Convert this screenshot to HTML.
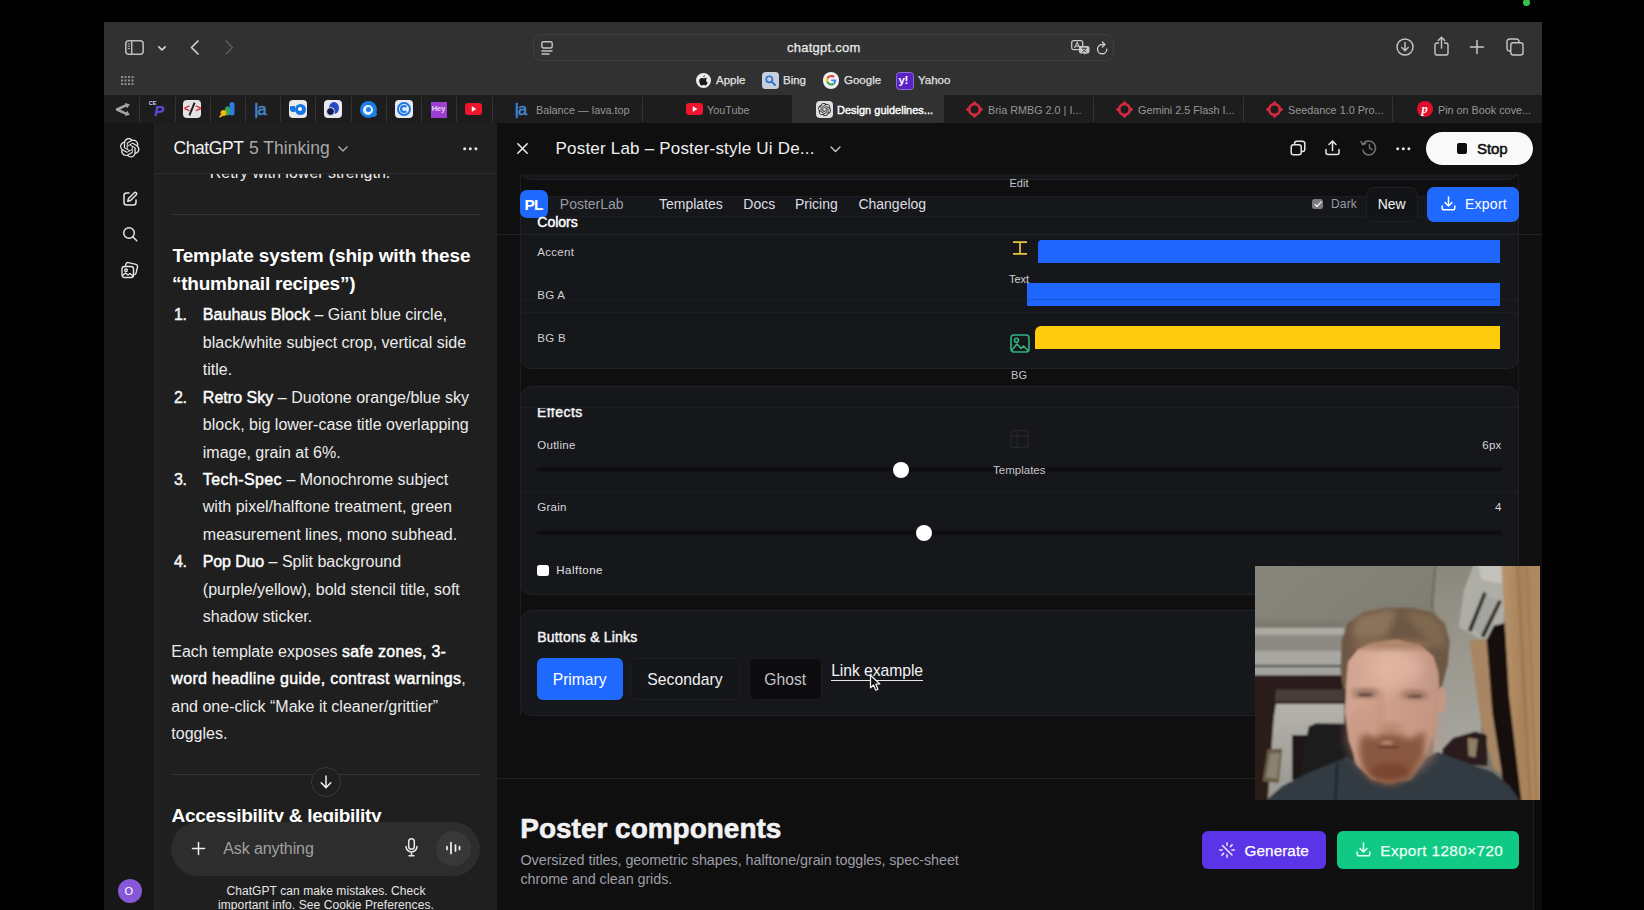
<!DOCTYPE html>
<html lang="en">
<head>
<meta charset="utf-8">
<title>Poster Lab</title>
<style>
*{box-sizing:border-box;margin:0;padding:0}
html,body{width:1644px;height:910px;overflow:hidden;background:#000}
body{font-family:"Liberation Sans",sans-serif;color:#ececec;position:relative;-webkit-font-smoothing:antialiased}
.a{position:absolute}
.t{position:absolute;white-space:nowrap;line-height:1}
svg{position:absolute;overflow:visible}
#win{left:104px;top:22px;width:1438px;height:888px;background:#0f0f10;overflow:hidden}
/* toolbar */
#tb{left:0;top:0;width:1438px;height:73px;background:#313131}
#url{left:429px;top:12px;width:581px;height:27px;border:1px solid #3f3f3f;border-radius:8px;background:#323232}
.fav{font-size:11.5px;color:#e2e2e2;top:53px;-webkit-text-stroke:.25px #e2e2e2}
/* tab bar */
#tabs{left:0;top:73px;width:1438px;height:28px;background:#1d1d1d}
.sep{position:absolute;top:2px;width:1px;height:25px;background:#333}
.tab{position:absolute;top:.7px;height:28px;font-size:10.8px;color:#979797;white-space:nowrap;line-height:28px}
.pin{position:absolute;top:5px;width:18px;height:18px;border-radius:4px}
/* sidebar */
#side{left:0;top:101px;width:51px;height:787px;background:#171717;border-right:1px solid #242424}
/* chat */
#chat{left:51px;top:101px;width:342px;height:787px;background:#1f1f1f;overflow:hidden}
#chat .li{font-size:16px;color:#ececec;left:47.5px}
#chat b{font-weight:400;color:#fff;-webkit-text-stroke:.45px #fff}
.sb{font-weight:400;-webkit-text-stroke:.45px currentColor}
/* canvas */
#cv{left:393px;top:101px;width:1045px;height:787px;background:#0f0f10;overflow:hidden}
.card{position:absolute;background:#16171b;border:1px solid #1f2025;border-radius:12px}
.lbl{font-size:11.5px;color:#d6d6da}
</style>
</head>
<body>
<div class="a" style="left:1523px;top:-1.500px;width:7px;height:7px;border-radius:50%;background:#36c24a"></div>
<div id="win" class="a">
<div id="tb" class="a">
<svg style="left:21px;top:17.500px" width="19" height="15" viewBox="0 0 19 15"><rect x=".8" y=".8" width="17.4" height="13.4" rx="3" fill="none" stroke="#bdbdbd" stroke-width="1.5"/><path d="M6.7 1v13" stroke="#bdbdbd" stroke-width="1.5"/><path d="M2.8 4h2M2.8 6.3h2M2.8 8.6h2" stroke="#bdbdbd" stroke-width="1"/></svg>
<div class="a" style="left:46px;top:15px;width:1px;height:19px;background:#3a3a3a"></div>
<svg style="left:53.500px;top:23.500px" width="8" height="5.300" viewBox="0 0 9 6"><path d="M1 1l3.5 3.5L8 1" fill="none" stroke="#dcdcdc" stroke-width="1.8" stroke-linecap="round" stroke-linejoin="round"/></svg>
<svg style="left:86px;top:18px" width="9" height="15" viewBox="0 0 9 15"><path d="M8 1L1.5 7.5 8 14" fill="none" stroke="#cfcfcf" stroke-width="1.7" stroke-linecap="round" stroke-linejoin="round"/></svg>
<svg style="left:121px;top:18px" width="9" height="15" viewBox="0 0 9 15"><path d="M1 1l6.5 6.5L1 14" fill="none" stroke="#595959" stroke-width="1.7" stroke-linecap="round" stroke-linejoin="round"/></svg>
<svg style="left:17px;top:54px" width="13" height="9" viewBox="0 0 13 9" fill="#8d8d8d"><rect x="0" y="0" width="2" height="2"/><rect x="3.5" y="0" width="2" height="2"/><rect x="7" y="0" width="2" height="2"/><rect x="10.5" y="0" width="2" height="2"/><rect x="0" y="3.5" width="2" height="2"/><rect x="3.5" y="3.5" width="2" height="2"/><rect x="7" y="3.5" width="2" height="2"/><rect x="10.5" y="3.5" width="2" height="2"/><rect x="0" y="7" width="2" height="2"/><rect x="3.5" y="7" width="2" height="2"/><rect x="7" y="7" width="2" height="2"/><rect x="10.5" y="7" width="2" height="2"/></svg>
<div id="url" class="a"></div>
<svg style="left:437px;top:19px" width="12" height="14" viewBox="0 0 12 14"><rect x=".8" y=".8" width="10.4" height="6.2" rx="1.8" fill="none" stroke="#c4c4c4" stroke-width="1.4"/><path d="M.5 10h11M.5 13h8" stroke="#c4c4c4" stroke-width="1.4"/></svg>
<div class="t" style="left:683px;top:18.5px;font-size:13px;color:#ececec;letter-spacing:.25px;-webkit-text-stroke:.25px #ececec">chatgpt.com</div>
<svg style="left:967px;top:18px" width="19" height="15" viewBox="0 0 19 15"><rect x=".7" y=".7" width="11" height="9" rx="2" fill="none" stroke="#c8c8c8" stroke-width="1.3"/><path d="M3.5 8l2.7-5.5L8.9 8M4.4 6.3h3.6" fill="none" stroke="#c8c8c8" stroke-width="1.1"/><path d="M8 6h8.5a2 2 0 012 2v3.5a2 2 0 01-2 2H15l-1.5 1.5V13.5H10a2 2 0 01-2-2z" fill="#c8c8c8"/><path d="M10.7 8.3h5M13.2 7.4v.9M11.3 11.8c2-1 3.2-2 3.6-3.5M12 9.5c.6 1 1.700 1.800 3.200 2.300" fill="none" stroke="#313131" stroke-width=".9"/></svg>
<svg style="left:992px;top:18.500px" width="12.300" height="14" viewBox="0 0 14 16"><path d="M12.3 9.300a5.300 5.300 0 11-5.300-5.300h2" fill="none" stroke="#cfcfcf" stroke-width="1.5" stroke-linecap="round"/><path d="M7.200 1l3 3-3 3" fill="none" stroke="#cfcfcf" stroke-width="1.5" stroke-linecap="round" stroke-linejoin="round"/></svg>
<svg style="left:1292px;top:16px" width="18" height="18" viewBox="0 0 18 18"><circle cx="9" cy="9" r="8" fill="none" stroke="#c6c6c6" stroke-width="1.4"/><path d="M9 4.500v8M5.800 9.500L9 12.700l3.200-3.200" fill="none" stroke="#c6c6c6" stroke-width="1.4" stroke-linecap="round" stroke-linejoin="round"/></svg>
<svg style="left:1330px;top:14px" width="15" height="20" viewBox="0 0 15 20"><path d="M4.500 7H3a2 2 0 00-2 2v8a2 2 0 002 2h9a2 2 0 002-2V9a2 2 0 00-2-2h-1.500" fill="none" stroke="#c6c6c6" stroke-width="1.4" stroke-linecap="round"/><path d="M7.500 12V1.500M4.300 4.500l3.200-3.200 3.200 3.200" fill="none" stroke="#c6c6c6" stroke-width="1.4" stroke-linecap="round" stroke-linejoin="round"/></svg>
<svg style="left:1366px;top:18px" width="14" height="14" viewBox="0 0 14 14"><path d="M7 .5v13M.5 7h13" stroke="#c6c6c6" stroke-width="1.500" stroke-linecap="round"/></svg>
<svg style="left:1402px;top:16px" width="18" height="18" viewBox="0 0 18 18"><path d="M4.500 13H3.500a2.500 2.500 0 01-2.500-2.500v-7A2.500 2.500 0 013.500 1h7A2.500 2.500 0 0113 3.500v1" fill="none" stroke="#c6c6c6" stroke-width="1.400"/><rect x="4.800" y="4.800" width="12.200" height="12.200" rx="2.500" fill="none" stroke="#c6c6c6" stroke-width="1.400"/></svg>
<!-- favourites -->
<div class="a" style="left:591.500px;top:50.500px;width:15px;height:15px;border-radius:50%;background:#ececec"></div>
<svg style="left:594.500px;top:52.500px" width="9" height="11" viewBox="0 0 9 11"><path d="M6.400 2.900c-.8 0-1.300.4-1.900.4s-1.200-.4-1.900-.4C1.400 2.900.2 4 .2 5.900c0 2 1.400 4.600 2.600 4.600.6 0 .9-.4 1.700-.4s1 .4 1.700.4c1.100 0 2.100-1.800 2.500-3-1-.4-1.600-1.300-1.600-2.300 0-.9.500-1.700 1.200-2.100-.5-.7-1.200-.2-1.900-.2zM5.900.3c-.8.100-1.600.8-1.600 1.900.9 0 1.700-.9 1.600-1.900z" fill="#1a1a1a"/></svg>
<div class="t fav" style="left:612px">Apple</div>
<div class="a" style="left:657.500px;top:49.500px;width:17.500px;height:17.500px;border-radius:3.500px;background:#c6d0dd"></div>
<svg style="left:661px;top:53px" width="11" height="11" viewBox="0 0 11 11"><circle cx="4.300" cy="4.300" r="3.100" fill="none" stroke="#2a6fd6" stroke-width="1.600"/><path d="M6.700 6.700l3.300 3.300" stroke="#2a6fd6" stroke-width="1.800" stroke-linecap="round"/></svg>
<div class="t fav" style="left:679px">Bing</div>
<div class="a" style="left:718.500px;top:50px;width:16.500px;height:16.500px;border-radius:50%;background:#f1f1f1"></div>
<svg style="left:721.500px;top:53px" width="10.500" height="10.500" viewBox="0 0 48 48"><path fill="#ea4335" d="M24 9.500c3.540 0 6.710 1.220 9.210 3.600l6.850-6.850C35.900 2.380 30.470 0 24 0 14.620 0 6.510 5.380 2.560 13.220l7.980 6.190C12.430 13.720 17.740 9.500 24 9.500z"/><path fill="#4285f4" d="M46.980 24.550c0-1.570-.15-3.090-.38-4.550H24v9.020h12.940c-.58 2.960-2.260 5.480-4.780 7.180l7.730 6c4.510-4.180 7.090-10.360 7.090-17.650z"/><path fill="#fbbc05" d="M10.530 28.590c-.48-1.450-.76-2.990-.76-4.590s.27-3.140.76-4.590l-7.980-6.190C.92 16.460 0 20.120 0 24c0 3.880.92 7.540 2.560 10.780l7.970-6.190z"/><path fill="#34a853" d="M24 48c6.480 0 11.930-2.130 15.890-5.810l-7.730-6c-2.150 1.450-4.920 2.300-8.160 2.300-6.260 0-11.570-4.220-13.470-9.910l-7.980 6.190C6.510 42.620 14.620 48 24 48z"/></svg>
<div class="t fav" style="left:740px">Google</div>
<div class="a" style="left:792px;top:49.500px;width:18px;height:18px;border-radius:3.500px;background:#5a21c4;border:1px solid #8a6ad8"></div>
<div class="t" style="left:794.500px;top:52.500px;font-size:11.500px;font-weight:700;color:#fff;letter-spacing:-.3px">y!</div>
<div class="t fav" style="left:814px">Yahoo</div>
</div>
<div id="tabs" class="a"><div class="sep" style="left:35.2px"></div><div class="sep" style="left:70.5px"></div><div class="sep" style="left:105.7px"></div><div class="sep" style="left:140.9px"></div><div class="sep" style="left:176.1px"></div><div class="sep" style="left:211.4px"></div><div class="sep" style="left:246.6px"></div><div class="sep" style="left:281.8px"></div><div class="sep" style="left:317.1px"></div><div class="sep" style="left:352.3px"></div><div class="sep" style="left:387.5px"></div><div class="sep" style="left:538px"></div><div class="sep" style="left:839.4px"></div><div class="sep" style="left:989.3px"></div><div class="sep" style="left:1139.3px"></div><div class="sep" style="left:1288px"></div><div class="a" style="left:688px;top:0;width:151.400px;height:28px;background:#313131"></div>
<svg style="left:9.500px;top:7.500px" width="16" height="13" viewBox="0 0 16 13"><path d="M12.500 2.200L3 6.500l9.500 4.300" fill="none" stroke="#a6a6a8" stroke-width="2.500" stroke-linejoin="round" stroke-linecap="round"/><path d="M10.800 0l5 1.300-2.600 4zM10.800 13l5-1.300-2.600-4z" fill="#a6a6a8"/></svg>
<div class="t" style="left:50.3px;top:8px;font-size:15px;font-weight:700;font-style:italic;color:#5b50e2">P</div><div class="t" style="left:44.8px;top:6px;font-size:5.500px;font-weight:700;color:#cfd2ff">CE</div>
<div class="pin" style="left:79.1px;background:#e6e2e2"></div><div class="t" style="left:80.1px;top:9px;font-size:10px;font-weight:700;color:#d02030;letter-spacing:5.500px">&lt;&gt;</div><div class="a" style="left:87.1px;top:7px;width:2px;height:14px;background:#222;transform:rotate(22deg)"></div>
<svg style="left:115.3px;top:6px" width="17" height="17" viewBox="0 0 17 17"><rect x="10.500" y="1" width="5" height="13.500" rx="2.500" fill="#2f7be8"/><rect x="6" y="5.500" width="5" height="9" rx="2.500" fill="#2fa85a"/><circle cx="4.500" cy="12" r="3" fill="#f3b511"/><path d="M.5 16l3-2" stroke="#f3b511" stroke-width="1.800"/></svg>
<div class="t" style="left:150.535px;top:5.500px;font-size:16.500px;color:#4489d2;letter-spacing:-.6px;-webkit-text-stroke:.5px #4489d2">ļa</div>
<div class="pin" style="left:184.8px;background:#e9eaee"></div><div class="a" style="left:190.8px;top:8.500px;width:11px;height:11px;border-radius:50%;background:#1577e6"></div><div class="a" style="left:194.3px;top:12px;width:4px;height:4px;border-radius:50%;background:#fff"></div><div class="a" style="left:186.3px;top:11px;width:5px;height:6px;background:#1577e6;border-radius:1px 0 0 3px"></div>
<div class="pin" style="left:220.0px;background:#e9eaee"></div><div class="a" style="left:225.0px;top:7px;width:10px;height:12px;border-radius:50%;background:#2747c9"></div><div class="a" style="left:222.0px;top:12px;width:9px;height:9px;border-radius:50%;background:#0f1a55;border:1px solid #e9eaee"></div>
<div class="a" style="left:255.7px;top:6px;width:17px;height:17px;border-radius:50%;background:#1c7fe6"></div><div class="a" style="left:259.2px;top:9.500px;width:10px;height:10px;border-radius:50%;background:#e8f2ff"></div><div class="a" style="left:261.7px;top:12px;width:5px;height:5px;border-radius:50%;background:#1c7fe6"></div><div class="a" style="left:267.2px;top:18px;width:6px;height:4px;background:#1c7fe6;border-radius:0 0 4px 0"></div>
<div class="pin" style="left:290.5px;background:#e9eaee"></div><div class="a" style="left:292.5px;top:7px;width:14px;height:14px;border-radius:50%;border:2px solid #1b78e8"></div><div class="a" style="left:295.5px;top:10px;width:8px;height:8px;border-radius:50%;border:2px solid #1b78e8;border-right-color:transparent"></div>
<div class="a" style="left:326.7px;top:6.500px;width:16px;height:16px;background:#9a3fd0"></div><div class="t" style="left:327.7px;top:10px;font-size:7.500px;font-weight:700;color:#e8d6f6">Hey</div>
<svg style="left:361.41499999999996px;top:7.5px" width="17" height="12" viewBox="0 0 17 12"><rect width="17" height="12" rx="3.200" fill="#f0142c"/><path d="M6.800 3.300v5.400L11.400 6z" fill="#fff"/></svg>

<div class="t" style="left:411px;top:5.500px;font-size:16.500px;color:#4489d2;letter-spacing:-.6px;-webkit-text-stroke:.5px #4489d2">ļa</div><div class="tab" style="left:432px">Balance — lava.top</div>
<svg style="left:582px;top:7.5px" width="17" height="12" viewBox="0 0 17 12"><rect width="17" height="12" rx="3.200" fill="#f0142c"/><path d="M6.800 3.300v5.400L11.400 6z" fill="#fff"/></svg><div class="tab" style="left:603px">YouTube</div>
<div class="a" style="left:712px;top:5.500px;width:17px;height:17px;border-radius:4px;background:#dedede"></div>
<svg style="left:714px;top:7.500px" width="13" height="13" viewBox="0 0 24 24"><path fill="#222" d="M22.2819 9.8211a5.9847 5.9847 0 0 0-.5157-4.9108 6.0462 6.0462 0 0 0-6.5098-2.9A6.0651 6.0651 0 0 0 4.9807 4.1818a5.9847 5.9847 0 0 0-3.9977 2.9 6.0462 6.0462 0 0 0 .7427 7.0966 5.98 5.98 0 0 0 .511 4.9107 6.051 6.051 0 0 0 6.5146 2.9001A5.9847 5.9847 0 0 0 13.2599 24a6.0557 6.0557 0 0 0 5.7718-4.2058 5.9894 5.9894 0 0 0 3.9977-2.9001 6.0557 6.0557 0 0 0-.7475-7.0729zm-9.022 12.6081a4.4755 4.4755 0 0 1-2.8764-1.0408l.1419-.0804 4.7783-2.7582a.7948.7948 0 0 0 .3927-.6813v-6.7369l2.02 1.1686a.071.071 0 0 1 .038.052v5.5826a4.504 4.504 0 0 1-4.4945 4.4944zm-9.6607-4.1254a4.4708 4.4708 0 0 1-.5346-3.0137l.142.0852 4.783 2.7582a.7712.7712 0 0 0 .7806 0l5.8428-3.3685v2.3324a.0804.0804 0 0 1-.0332.0615L9.74 19.9502a4.4992 4.4992 0 0 1-6.1408-1.6464zM2.3408 7.8956a4.485 4.485 0 0 1 2.3655-1.9728V11.6a.7664.7664 0 0 0 .3879.6765l5.8144 3.3543-2.0201 1.1685a.0757.0757 0 0 1-.071 0l-4.8303-2.7865A4.504 4.504 0 0 1 2.3408 7.872zm16.5963 3.8558L13.1038 8.364 15.1192 7.2a.0757.0757 0 0 1 .071 0l4.8303 2.7913a4.4944 4.4944 0 0 1-.6765 8.1042v-5.6772a.79.79 0 0 0-.407-.667zm2.0107-3.0231l-.142-.0852-4.7735-2.7818a.7759.7759 0 0 0-.7854 0L9.409 9.2297V6.8974a.0662.0662 0 0 1 .0284-.0615l4.8303-2.7866a4.4992 4.4992 0 0 1 6.6802 4.66zM8.3065 12.863l-2.02-1.1638a.0804.0804 0 0 1-.038-.0567V6.0742a4.4992 4.4992 0 0 1 7.3757-3.4537l-.142.0805L8.704 5.459a.7948.7948 0 0 0-.3927.6813zm1.0976-2.3654l2.602-1.4998 2.6069 1.4998v2.9994l-2.5974 1.4997-2.6067-1.4997Z"/></svg>
<div class="tab" style="left:733px;color:#fff;font-size:11px;-webkit-text-stroke:.4px #fff">Design guidelines...</div>
<svg style="left:862px;top:5.5px" width="17" height="17" viewBox="0 0 17 17"><circle cx="8.500" cy="8.500" r="5.300" fill="none" stroke="#d32a40" stroke-width="2.700"/><g fill="#d32a40"><circle cx="8.500" cy="1.900" r="1.700"/><circle cx="8.500" cy="15.100" r="1.700"/><circle cx="1.900" cy="8.500" r="1.700"/><circle cx="15.100" cy="8.500" r="1.700"/></g></svg><div class="tab" style="left:884px">Bria RMBG 2.0 | I...</div>
<svg style="left:1012px;top:5.5px" width="17" height="17" viewBox="0 0 17 17"><circle cx="8.500" cy="8.500" r="5.300" fill="none" stroke="#d32a40" stroke-width="2.700"/><g fill="#d32a40"><circle cx="8.500" cy="1.900" r="1.700"/><circle cx="8.500" cy="15.100" r="1.700"/><circle cx="1.900" cy="8.500" r="1.700"/><circle cx="15.100" cy="8.500" r="1.700"/></g></svg><div class="tab" style="left:1034px">Gemini 2.5 Flash I...</div>
<svg style="left:1162px;top:5.5px" width="17" height="17" viewBox="0 0 17 17"><circle cx="8.500" cy="8.500" r="5.300" fill="none" stroke="#d32a40" stroke-width="2.700"/><g fill="#d32a40"><circle cx="8.500" cy="1.900" r="1.700"/><circle cx="8.500" cy="15.100" r="1.700"/><circle cx="1.900" cy="8.500" r="1.700"/><circle cx="15.100" cy="8.500" r="1.700"/></g></svg><div class="tab" style="left:1184px">Seedance 1.0 Pro...</div>
<div class="a" style="left:1313px;top:6px;width:16px;height:16px;border-radius:50%;background:#e0102c"></div><div class="t" style="left:1317.500px;top:7.500px;font-size:12.500px;font-weight:700;font-style:italic;font-family:'Liberation Serif',serif;color:#fff">p</div>
<div class="tab" style="left:1334px">Pin on Book cove...</div>
</div>
<div id="side" class="a">
<svg style="left:16.300px;top:15.300px" width="19.500" height="19.500" viewBox="0 0 24 24"><path fill="#e8e8e8" d="M22.2819 9.8211a5.9847 5.9847 0 0 0-.5157-4.9108 6.0462 6.0462 0 0 0-6.5098-2.9A6.0651 6.0651 0 0 0 4.9807 4.1818a5.9847 5.9847 0 0 0-3.9977 2.9 6.0462 6.0462 0 0 0 .7427 7.0966 5.98 5.98 0 0 0 .511 4.9107 6.051 6.051 0 0 0 6.5146 2.9001A5.9847 5.9847 0 0 0 13.2599 24a6.0557 6.0557 0 0 0 5.7718-4.2058 5.9894 5.9894 0 0 0 3.9977-2.9001 6.0557 6.0557 0 0 0-.7475-7.0729zm-9.022 12.6081a4.4755 4.4755 0 0 1-2.8764-1.0408l.1419-.0804 4.7783-2.7582a.7948.7948 0 0 0 .3927-.6813v-6.7369l2.02 1.1686a.071.071 0 0 1 .038.052v5.5826a4.504 4.504 0 0 1-4.4945 4.4944zm-9.6607-4.1254a4.4708 4.4708 0 0 1-.5346-3.0137l.142.0852 4.783 2.7582a.7712.7712 0 0 0 .7806 0l5.8428-3.3685v2.3324a.0804.0804 0 0 1-.0332.0615L9.74 19.9502a4.4992 4.4992 0 0 1-6.1408-1.6464zM2.3408 7.8956a4.485 4.485 0 0 1 2.3655-1.9728V11.6a.7664.7664 0 0 0 .3879.6765l5.8144 3.3543-2.0201 1.1685a.0757.0757 0 0 1-.071 0l-4.8303-2.7865A4.504 4.504 0 0 1 2.3408 7.872zm16.5963 3.8558L13.1038 8.364 15.1192 7.2a.0757.0757 0 0 1 .071 0l4.8303 2.7913a4.4944 4.4944 0 0 1-.6765 8.1042v-5.6772a.79.79 0 0 0-.407-.667zm2.0107-3.0231l-.142-.0852-4.7735-2.7818a.7759.7759 0 0 0-.7854 0L9.409 9.2297V6.8974a.0662.0662 0 0 1 .0284-.0615l4.8303-2.7866a4.4992 4.4992 0 0 1 6.6802 4.66zM8.3065 12.863l-2.02-1.1638a.0804.0804 0 0 1-.038-.0567V6.0742a4.4992 4.4992 0 0 1 7.3757-3.4537l-.142.0805L8.704 5.459a.7948.7948 0 0 0-.3927.6813zm1.0976-2.3654l2.602-1.4998 2.6069 1.4998v2.9994l-2.5974 1.4997-2.6067-1.4997Z"/></svg>
<svg style="left:18px;top:68px" width="16" height="16" viewBox="0 0 16 16" fill="none" stroke="#e6e6e6" stroke-width="1.500" stroke-linecap="round" stroke-linejoin="round"><path d="M7 2H4.500A2.500 2.500 0 002 4.500v7A2.500 2.500 0 004.500 14h7a2.500 2.500 0 002.500-2.500V9"/><path d="M12.300 1.700a1.400 1.400 0 012 2L8.500 9.500l-2.700.7.700-2.700z"/></svg>
<svg style="left:17.500px;top:103px" width="16" height="16" viewBox="0 0 16 16" fill="none" stroke="#e6e6e6" stroke-width="1.500" stroke-linecap="round"><circle cx="7" cy="7" r="5.300"/><path d="M11 11l3.800 3.800"/></svg>
<svg style="left:17px;top:138px" width="18" height="18" viewBox="0 0 18 18" fill="none" stroke="#e6e6e6" stroke-width="1.400" stroke-linecap="round" stroke-linejoin="round"><path d="M4.500 4.800l.4-1.700a2 2 0 012.400-1.500l7.700 1.800a2 2 0 011.500 2.400l-1.500 6.300a2 2 0 01-1.500 1.500"/><rect x="1" y="5.500" width="11.500" height="11" rx="2.500"/><circle cx="5" cy="9.300" r="1.300"/><path d="M1.500 14.500l3-2.500 2.500 2 2-1.500 3.300 2.500"/></svg>
<div class="a" style="left:13.500px;top:756px;width:24px;height:24px;border-radius:50%;background:#8657d6"></div>
<div class="t" style="left:20.500px;top:762.500px;font-size:11px;color:#fff">O</div>
</div>
<div id="chat" class="a"><div class="t" style="left:54.8px;top:42.2px;font-size:16px;color:#ececec">Retry with lower strength.</div>
<div class="a" style="left:0;top:0;width:342px;height:51px;background:#1f1f1f;border-bottom:1px solid #2d2d2d"></div>
<div class="t" style="left:18.6px;top:17.0px;font-size:17.5px;color:#f2f2f2;letter-spacing:-.45px">ChatGPT</div>
<div class="t" style="left:93.9px;top:17.0px;font-size:17.5px;color:#a8a8a8;letter-spacing:.05px">5 Thinking</div>
<svg style="left:182.500px;top:22.500px" width="10" height="6" viewBox="0 0 10 6"><path d="M.8.800l4.200 4.200L9.200.800" fill="none" stroke="#a8a8a8" stroke-width="1.400" stroke-linecap="round" stroke-linejoin="round"/></svg>
<svg style="left:308px;top:24px" width="15" height="4" viewBox="0 0 15 4" fill="#e8e8e8"><circle cx="1.700" cy="1.700" r="1.500"/><circle cx="7.300" cy="1.700" r="1.500"/><circle cx="12.900" cy="1.700" r="1.500"/></svg>
<div class="a" style="left:17px;top:90.800px;width:309px;height:1px;background:#363636"></div>
<div class="t" style="left:17.6px;top:123.0px;font-size:19px;font-weight:700;color:#fff;letter-spacing:-.12px">Template system (ship with these</div>
<div class="t" style="left:17.0px;top:150.5px;font-size:19px;font-weight:700;color:#fff;letter-spacing:-.23px">“thumbnail recipes”)</div>
<div class="t" style="left:19.0px;top:184.4px;font-size:16px;color:#f4f4f4;-webkit-text-stroke:.45px #f4f4f4;letter-spacing:-.3px">1.</div>
<div class="t" style="left:47.8px;top:184.4px;font-size:16px;color:#ececec"><b style="letter-spacing:0.04px">Bauhaus Block</b> – Giant blue circle,</div>
<div class="t" style="left:47.8px;top:211.9px;font-size:16px;color:#ececec">black/white subject crop, vertical side</div>
<div class="t" style="left:47.8px;top:239.3px;font-size:16px;color:#ececec">title.</div>
<div class="t" style="left:19.0px;top:266.7px;font-size:16px;color:#f4f4f4;-webkit-text-stroke:.45px #f4f4f4;letter-spacing:-.3px">2.</div>
<div class="t" style="left:47.8px;top:266.7px;font-size:16px;color:#ececec"><b style="letter-spacing:0.04px">Retro Sky</b> – Duotone orange/blue sky</div>
<div class="t" style="left:47.8px;top:294.1px;font-size:16px;color:#ececec">block, big lower-case title overlapping</div>
<div class="t" style="left:47.8px;top:321.5px;font-size:16px;color:#ececec">image, grain at 6%.</div>
<div class="t" style="left:19.0px;top:349.0px;font-size:16px;color:#f4f4f4;-webkit-text-stroke:.45px #f4f4f4;letter-spacing:-.3px">3.</div>
<div class="t" style="left:47.8px;top:349.0px;font-size:16px;color:#ececec"><b style="letter-spacing:0.4px">Tech-Spec</b> – Monochrome subject</div>
<div class="t" style="left:47.8px;top:376.4px;font-size:16px;color:#ececec">with pixel/halftone treatment, green</div>
<div class="t" style="left:47.8px;top:403.8px;font-size:16px;color:#ececec">measurement lines, mono subhead.</div>
<div class="t" style="left:19.0px;top:431.2px;font-size:16px;color:#f4f4f4;-webkit-text-stroke:.45px #f4f4f4;letter-spacing:-.3px">4.</div>
<div class="t" style="left:47.8px;top:431.2px;font-size:16px;color:#ececec"><b style="letter-spacing:-0.14px">Pop Duo</b> – Split background</div>
<div class="t" style="left:47.8px;top:458.6px;font-size:16px;color:#ececec">(purple/yellow), bold stencil title, soft</div>
<div class="t" style="left:47.8px;top:486.1px;font-size:16px;color:#ececec">shadow sticker.</div>
<div class="t" style="left:16.3px;top:520.8px;font-size:16px;color:#ececec">Each template exposes <b style="letter-spacing:0.26px">safe zones, 3-</b></div>
<div class="t" style="left:16.3px;top:548.3px;font-size:16px;color:#ececec"><b style="letter-spacing:0.33px">word headline guide, contrast warnings</b>,</div>
<div class="t" style="left:16.3px;top:575.7px;font-size:16px;color:#ececec">and one-click “Make it cleaner/grittier”</div>
<div class="t" style="left:16.3px;top:603.1px;font-size:16px;color:#ececec">toggles.</div>
<div class="a" style="left:17px;top:651px;width:309px;height:1px;background:#363636"></div>
<div class="t" style="left:16.5px;top:683.4px;font-size:19px;font-weight:700;color:#fff;letter-spacing:-.3px">Accessibility &amp; legibility</div>
<div class="a" style="left:155.500px;top:643.500px;width:30px;height:30px;border-radius:50%;background:#1f1f1f;border:1px solid #3a3a3a"></div>
<svg style="left:164.500px;top:652px" width="12" height="14" viewBox="0 0 12 14"><path d="M6 1v11.500M1.200 7.800L6 12.600l4.800-4.800" fill="none" stroke="#f0f0f0" stroke-width="1.500" stroke-linecap="round" stroke-linejoin="round"/></svg>
<div class="a" style="left:0;top:699px;width:342px;height:88px;background:#1f1f1f"></div>
<div class="a" style="left:16.300px;top:699px;width:308.500px;height:53.700px;border-radius:27px;background:#2d2d2d"></div>
<svg style="left:36.500px;top:718.500px" width="13" height="13" viewBox="0 0 13 13"><path d="M6.500.5v12M.5 6.500h12" stroke="#f0f0f0" stroke-width="1.500" stroke-linecap="round"/></svg>
<div class="t" style="left:68.3px;top:717.6px;font-size:16px;color:#a0a0a0;letter-spacing:-.1px">Ask anything</div>
<svg style="left:250px;top:715px" width="13" height="19" viewBox="0 0 13 19" fill="none" stroke="#e8e8e8" stroke-width="1.500" stroke-linecap="round"><rect x="3.700" y=".8" width="5.600" height="10.500" rx="2.800"/><path d="M1 8.500a5.500 5.500 0 0011 0M6.500 14v3.500M4 17.800h5"/></svg>
<div class="a" style="left:280.500px;top:707.500px;width:35px;height:35px;border-radius:50%;background:#383838"></div>
<svg style="left:291px;top:718px" width="15" height="14" viewBox="0 0 15 14"><path d="M1 5.500v3M5 1.500v11M9.500 4v6M13.500 5.500v3" stroke="#f2f2f2" stroke-width="1.700" stroke-linecap="round"/></svg>
<div class="t" style="left:0;width:342px;text-align:center;top:761.500px;font-size:12px;color:#e6e6e6;letter-spacing:.08px">ChatGPT can make mistakes. Check</div>
<div class="t" style="left:0;width:342px;text-align:center;top:776px;font-size:12px;color:#e6e6e6;letter-spacing:.08px">important info. See Cookie Preferences.</div>
</div>
<div id="cv" class="a"><div class="a" style="left:1035.5px;top:676.0px;width:9.5px;height:111.0px;background:#0b0b0d;border-left:1px solid #1e1e21"></div>
<div class="a" style="left:23.0px;top:51.0px;width:1.0px;height:542.0px;background:#1c1d21"></div>
<div class="a" style="left:1021.0px;top:51.0px;width:1.0px;height:426.0px;background:#1a1b1f"></div>
<div class="a" style="left:23.0px;top:45.0px;width:998.5px;height:12.0px;background:#16171b;border:1px solid #212228;border-radius:0 0 12px 12px"></div>
<div class="a" style="left:23.0px;top:73.0px;width:998.5px;height:173.3px;background:#16171b;border:1px solid #212228;border-radius:0 0 12px 12px;border-top-color:#1d1e23"></div>
<div class="a" style="left:24.0px;top:93.0px;width:997.0px;height:1.0px;background:#1c1d22"></div>
<div class="a" style="left:24.0px;top:176.0px;width:997.0px;height:1.0px;background:#1d1e23"></div>
<div class="a" style="left:24.0px;top:189.0px;width:997.0px;height:1.0px;background:#1c1d22"></div>
<div class="a" style="left:0.0px;top:111.2px;width:1045.0px;height:1.0px;background:#222327"></div>
<div class="a" style="left:23.0px;top:263.0px;width:998.5px;height:208.8px;background:#16171b;border:1px solid #212228;border-radius:12px"></div>
<div class="a" style="left:24.0px;top:284.0px;width:997.0px;height:1.0px;background:#1d1e23"></div>
<div class="a" style="left:24.0px;top:368.0px;width:997.0px;height:1.0px;background:#1d1e23"></div>
<div class="a" style="left:23.0px;top:487.4px;width:998.5px;height:105.6px;background:#16171b;border:1px solid #212228;border-radius:12px"></div>
<div class="a" style="left:0.0px;top:655.0px;width:1036.0px;height:1.0px;background:#222226"></div>
<div class="a" style="left:23.3px;top:67.1px;width:27.3px;height:27.5px;background:#1f69ff;border-radius:7px"></div>
<div class="t" style="left:27.6px;top:73.9px;font-size:15.5px;font-weight:700;color:#fff;letter-spacing:-.9px">PL</div>
<div class="t" style="left:62.8px;top:73.6px;font-size:14px;color:#9a9ba3">PosterLab</div>
<div class="t" style="left:162.0px;top:74.0px;font-size:14px;color:#dedee2">Templates</div>
<div class="t" style="left:246.3px;top:74.0px;font-size:14px;color:#dedee2">Docs</div>
<div class="t" style="left:298.0px;top:74.0px;font-size:14px;color:#dedee2">Pricing</div>
<div class="t" style="left:361.4px;top:74.0px;font-size:14px;color:#dedee2">Changelog</div>
<div class="t" style="left:40.3px;top:92.3px;font-size:14px;color:#fff;-webkit-text-stroke:.45px #fff">Colors</div>
<div class="a" style="left:815.0px;top:75.5px;width:10.5px;height:10.5px;background:#7a7a80;border-radius:2.5px"></div>
<svg style="left:816.5px;top:77.5px" width="8" height="7" viewBox="0 0 8 7"><path d="M1 3.500l2 2L7 1" fill="none" stroke="#e8e8ea" stroke-width="1.400" stroke-linecap="round" stroke-linejoin="round"/></svg>
<div class="t" style="left:834.0px;top:75.1px;font-size:12px;color:#9c9ca4;letter-spacing:.15px">Dark</div>
<div class="a" style="left:869.0px;top:63.5px;width:52.0px;height:35.0px;border:1px solid #202126;border-radius:8px;background:#131417"></div>
<div class="t" style="left:794.7px;width:200px;text-align:center;top:74.1px;font-size:14px;color:#f4f4f6">New</div>
<div class="a" style="left:930.0px;top:63.5px;width:91.5px;height:35.0px;background:#1f69ff;border-radius:7px"></div>
<svg style="left:943.5px;top:73px" width="15" height="15" viewBox="0 0 15 15" fill="none" stroke="#fff" stroke-width="1.500" stroke-linecap="round" stroke-linejoin="round"><path d="M7.500 1v8.500M4 6.500l3.500 3.500L11 6.500M1.200 10v2.300a1.500 1.500 0 001.500 1.500h9.600a1.500 1.500 0 001.500-1.500V10"/></svg>
<div class="t" style="left:968.0px;top:74.1px;font-size:14px;color:#fff;letter-spacing:.25px">Export</div>
<div class="t" style="left:40.2px;top:123.5px;font-size:11.5px;color:#cfcfd4;letter-spacing:.3px">Accent</div>
<div class="t" style="left:40.2px;top:166.6px;font-size:11.5px;color:#cfcfd4;letter-spacing:.3px">BG A</div>
<div class="t" style="left:40.2px;top:209.6px;font-size:11.5px;color:#cfcfd4;letter-spacing:.3px">BG B</div>
<div class="a" style="left:540.5px;top:117.0px;width:462.5px;height:22.5px;background:#1f66ff;border-radius:4px 0 0 0"></div>
<div class="a" style="left:530.0px;top:160.0px;width:473.0px;height:22.5px;background:#1f66ff"></div>
<div class="a" style="left:530.0px;top:175.6px;width:473.0px;height:1.0px;background:#1a55d8"></div>
<div class="a" style="left:537.5px;top:203.0px;width:465.5px;height:23.3px;background:#ffcc0d;border-radius:6px 0 0 0"></div>
<div class="t" style="left:422.0px;width:200px;text-align:center;top:54.5px;font-size:11px;color:#c4c4c8">Edit</div>
<svg style="left:514.5px;top:117.5px" width="16" height="14" viewBox="0 0 16 14"><path d="M1 1.200h14M1 12.800h14M8 1.200v11.600" stroke="#e8c63a" stroke-width="1.700" fill="none"/></svg>
<div class="t" style="left:422.0px;width:200px;text-align:center;top:150.7px;font-size:11px;color:#d2d2d6">Text</div>
<svg style="left:512.5px;top:210.5px" width="20" height="19" viewBox="0 0 20 19" fill="none" stroke="#2fb383" stroke-width="1.600" stroke-linejoin="round"><rect x="1" y="1" width="18" height="17" rx="3"/><circle cx="6.500" cy="6.300" r="2"/><path d="M1.500 16.500l5.500-6.500 4 4.500 2.500-2.500 5 5"/></svg>
<div class="t" style="left:422.0px;width:200px;text-align:center;top:246.7px;font-size:11px;color:#c4c4c8">BG</div>
<svg style="left:513px;top:307px" width="19" height="18" viewBox="0 0 19 18" fill="none" stroke="#24252a" stroke-width="1.300"><rect x=".7" y=".7" width="17.600" height="16.600" rx="1.500"/><path d="M.7 6h17.600M7 .7v16.600"/></svg>
<div class="a" style="left:40px;top:284.5px;width:120px;height:20px;overflow:hidden"><div class="t" style="left:0;top:-2.400px;font-size:14px;color:#f4f4f6;-webkit-text-stroke:.45px #f4f4f6;letter-spacing:.45px">Effects</div></div>
<div class="t" style="left:40.2px;top:316.6px;font-size:11.5px;color:#d6d6da;letter-spacing:.3px">Outline</div>
<div class="t" style="left:804.5px;width:200px;text-align:right;top:316.6px;font-size:11.5px;color:#d6d6da;letter-spacing:.2px">6px</div>
<div class="a" style="left:40.0px;top:345.2px;width:964.0px;height:3.2px;background:#0d0d10;border-radius:2px;box-shadow:0 0 2px #0e0e11"></div>
<div class="a" style="left:396.0px;top:339.3px;width:16.0px;height:16.0px;background:#fff;border-radius:50%"></div>
<div class="t" style="left:40.2px;top:379.1px;font-size:11.5px;color:#d6d6da;letter-spacing:.3px">Grain</div>
<div class="t" style="left:804.5px;width:200px;text-align:right;top:379.1px;font-size:11.5px;color:#d6d6da">4</div>
<div class="a" style="left:40.0px;top:407.5px;width:964.0px;height:3.3px;background:#0d0d10;border-radius:2px;box-shadow:0 0 2px #0e0e11"></div>
<div class="a" style="left:419.3px;top:401.8px;width:16.0px;height:16.0px;background:#fff;border-radius:50%"></div>
<div class="a" style="left:40.0px;top:441.5px;width:11.6px;height:11.5px;background:#fff;border-radius:2.5px"></div>
<div class="t" style="left:59.2px;top:441.7px;font-size:11.5px;color:#e0e0e4;letter-spacing:.5px">Halftone</div>
<div class="t" style="left:422.3px;width:200px;text-align:center;top:342.1px;font-size:11.5px;color:#c6c6ca">Templates</div>
<div class="t" style="left:40.2px;top:506.7px;font-size:14px;color:#f4f4f6;-webkit-text-stroke:.45px #f4f4f6;letter-spacing:.2px">Buttons &amp; Links</div>
<div class="a" style="left:39.6px;top:535.4px;width:86.1px;height:41.2px;background:#1f69ff;border-radius:6px"></div>
<div class="t" style="left:-17.4px;width:200px;text-align:center;top:549.3px;font-size:15.7px;color:#fff;letter-spacing:-.05px">Primary</div>
<div class="a" style="left:133.4px;top:535.4px;width:109.3px;height:41.2px;background:#15161a;border:1px solid #1f2025;border-radius:6px"></div>
<div class="t" style="left:88.0px;width:200px;text-align:center;top:549.3px;font-size:15.7px;color:#f0f0f2;letter-spacing:.05px">Secondary</div>
<div class="a" style="left:251.5px;top:535.4px;width:73.7px;height:41.2px;background:#0c0c0e;border:1px solid #1a1b1f;border-radius:6px"></div>
<div class="t" style="left:188.2px;width:200px;text-align:center;top:549.3px;font-size:15.7px;color:#c4c4c8;letter-spacing:.05px">Ghost</div>
<div class="t" style="left:334.2px;top:540.4px;font-size:15.7px;color:#f4f4f6;letter-spacing:-.05px">Link example</div>
<div class="a" style="left:334.2px;top:557.2px;width:92.1px;height:1.2px;background:#e8e8ea"></div>
<svg style="left:371.5px;top:551px" width="13" height="19" viewBox="0 0 13 19"><path d="M1.500 1.200v12.600l3-2.800 2.200 5.200 2.300-1-2.200-5 4-.2z" fill="#111" stroke="#f4f4f4" stroke-width="1.200" stroke-linejoin="round"/></svg>
<div class="t" style="left:23.3px;top:692.3px;font-size:28px;font-weight:700;color:#f2f2f4;letter-spacing:-.02px;-webkit-text-stroke:.6px #f2f2f4">Poster components</div>
<div class="t" style="left:23.5px;top:729.8px;font-size:14.35px;color:#9d9da6;letter-spacing:-.06px">Oversized titles, geometric shapes, halftone/grain toggles, spec-sheet</div>
<div class="t" style="left:23.5px;top:749.3px;font-size:14.35px;color:#9d9da6;letter-spacing:-.06px">chrome and clean grids.</div>
<div class="a" style="left:705.0px;top:707.8px;width:123.6px;height:38.6px;background:#5b34e8;border-radius:6px"></div>
<svg style="left:722px;top:719px" width="16" height="16" viewBox="0 0 16 16" stroke="#f2e8ff" stroke-width="1.500" stroke-linecap="round"><path d="M3.500 3.500l9.500 9.500M8 .8v2.400M8 12.800v2.400M.8 8h2.400M12.800 8h2.400M2.900 13.100l1.700-1.700M11.400 4.600l1.700-1.700"/></svg>
<div class="t" style="left:747.6px;top:719.6px;font-size:15.3px;color:#fff;letter-spacing:.05px;-webkit-text-stroke:.25px #fff">Generate</div>
<div class="a" style="left:840.2px;top:707.8px;width:181.7px;height:38.6px;background:#10c984;border-radius:6px"></div>
<svg style="left:858.5px;top:719px" width="15" height="15" viewBox="0 0 15 15" fill="none" stroke="#eafff5" stroke-width="1.500" stroke-linecap="round" stroke-linejoin="round"><path d="M7.500 1v8.500M4 6.500l3.500 3.500L11 6.500M1.200 10v2.300a1.500 1.500 0 001.500 1.500h9.600a1.500 1.500 0 001.500-1.500V10"/></svg>
<div class="t" style="left:883.3px;top:719.6px;font-size:15.3px;color:#e9fff6;letter-spacing:.4px;-webkit-text-stroke:.25px #e9fff6">Export 1280×720</div>
<div class="a" style="left:0.0px;top:0.0px;width:1045.0px;height:50.5px;background:#0f0f10"></div>
<svg style="left:19.5px;top:19.5px" width="11" height="11" viewBox="0 0 11 11"><path d="M.8.800l9.400 9.400M10.200.8L.8 10.200" stroke="#e8e8e8" stroke-width="1.600" stroke-linecap="round"/></svg>
<div class="t" style="left:58.5px;top:17.1px;font-size:17px;color:#f0f0f0;letter-spacing:.2px">Poster Lab – Poster-style Ui De...</div>
<svg style="left:332.5px;top:22.5px" width="11" height="7" viewBox="0 0 11 7"><path d="M1 1l4.500 4.500L10 1" fill="none" stroke="#c8c8c8" stroke-width="1.400" stroke-linecap="round" stroke-linejoin="round"/></svg>
<svg style="left:792.5px;top:17px" width="16" height="16" viewBox="0 0 16 16" fill="none" stroke="#e6e6e6" stroke-width="1.500"><g transform="translate(16 0) scale(-1 1)"><path d="M4.800 11.500H3.500A2.300 2.300 0 011.200 9.200V3.500a2.300 2.300 0 012.300-2.300h5.700a2.300 2.300 0 012.300 2.300v1"/><rect x="4.800" y="4.800" width="10" height="10" rx="2.300"/></g></svg>
<svg style="left:828px;top:16.5px" width="15" height="16" viewBox="0 0 15 16" fill="none" stroke="#e6e6e6" stroke-width="1.500" stroke-linecap="round" stroke-linejoin="round"><path d="M7.500 10.500V1.200M4 4.500l3.500-3.400L11 4.500M1 9.500v3a2 2 0 002 2h9a2 2 0 002-2v-3"/></svg>
<svg style="left:862.5px;top:17px" width="17" height="16" viewBox="0 0 17 16" fill="none" stroke="#6e6e6e" stroke-width="1.500" stroke-linecap="round" stroke-linejoin="round"><path d="M2.500 4.500A7 7 0 119.500 15 7 7 0 012.800 10M1 1.500l1.500 3.300 3.300-1.300M9.500 4.500V8l2.500 1.500"/></svg>
<svg style="left:898.5px;top:23.5px" width="15" height="4" viewBox="0 0 15 4" fill="#e8e8e8"><circle cx="1.700" cy="1.700" r="1.500"/><circle cx="7.300" cy="1.700" r="1.500"/><circle cx="12.900" cy="1.700" r="1.500"/></svg>
<div class="a" style="left:929.0px;top:8.5px;width:107.0px;height:33.0px;background:#f9f9f9;border-radius:17px"></div>
<div class="a" style="left:959.5px;top:20.0px;width:10.8px;height:10.7px;background:#0d0d0d;border-radius:2px"></div>
<div class="t" style="left:980.0px;top:18.1px;font-size:15px;color:#0d0d0d;-webkit-text-stroke:.5px #0d0d0d;letter-spacing:-.1px">Stop</div>
<svg style="left:758px;top:442.500px" width="285" height="233.5" viewBox="0 0 285 233.5">
<defs><filter id="b1" x="-10%" y="-10%" width="120%" height="120%"><feGaussianBlur stdDeviation="1.1"/></filter><filter id="b2" x="-20%" y="-20%" width="140%" height="140%"><feGaussianBlur stdDeviation="3"/></filter><filter id="b3" x="-30%" y="-30%" width="160%" height="160%"><feGaussianBlur stdDeviation="6"/></filter><linearGradient id="ceil" x1="0" y1="0" x2="1" y2="1"><stop offset="0" stop-color="#88867b"/><stop offset="1" stop-color="#76736a"/></linearGradient><linearGradient id="pil" x1="0" y1="0" x2="0" y2="1"><stop offset="0" stop-color="#8a887b"/><stop offset=".45" stop-color="#9a988e"/><stop offset="1" stop-color="#a7a7a0"/></linearGradient><linearGradient id="iw" x1="0" y1="0" x2="0" y2="1"><stop offset="0" stop-color="#b4b2ac"/><stop offset="1" stop-color="#989690"/></linearGradient><linearGradient id="cur" x1="0" y1="0" x2="1" y2="0"><stop offset="0" stop-color="#b8946c"/><stop offset=".5" stop-color="#a8825a"/><stop offset="1" stop-color="#b48c62"/></linearGradient><linearGradient id="skin" x1="0" y1="0" x2="1" y2="0"><stop offset="0" stop-color="#cfa390"/><stop offset=".45" stop-color="#dcb09c"/><stop offset="1" stop-color="#c09482"/></linearGradient><clipPath id="cc"><rect width="285" height="233.5"/></clipPath></defs>
<g clip-path="url(#cc)"><rect width="285" height="233.5" fill="url(#ceil)"/>
<g filter="url(#b1)">
<polygon points="181.3,-2.0 226.1,-2.0 226.1,191.4 178.5,191.4 178.5,124.1 189.7,73.7 178.5,40.1" fill="url(#pil)" />
<polygon points="179.3,-2.0 181.8,-2.0 177.9,42.9 175.7,42.3" fill="#6f6c61" />
<rect x="-3.6" y="55.8" width="93.0" height="6.2" fill="#77756b" filter="url(#b2)"/>
<rect x="-3.6" y="61.9" width="93.0" height="7.0" fill="#adaba4" />
<rect x="-3.6" y="68.9" width="93.0" height="16.0" fill="#8d8a83" />
<rect x="-3.6" y="84.9" width="93.0" height="14.6" fill="#a9a7a1" />
<rect x="-3.6" y="99.2" width="93.0" height="2.0" fill="#2e2925" />
<rect x="-3.6" y="100.9" width="93.0" height="8.4" fill="#a3a39f" />
<rect x="-3.6" y="109.3" width="100.9" height="126.9" fill="#2a1e1b" />
<rect x="18.8" y="123.6" width="70.6" height="11.8" fill="#4a3d38" />
<polygon points="21.0,138.1 89.4,138.1 89.4,236.2 6.2,236.2 13.2,185.8" fill="url(#iw)" />
<polygon points="1.4,112.9 21.0,121.3 12.6,236.2 -3.6,236.2 -3.6,112.9" fill="#2a1d19" />
<polygon points="12.6,183.5 27.2,182.4 23.8,217.1 7.6,215.2" fill="#6b5a46" />
<polygon points="14.9,187.4 24.9,186.9 22.1,212.7 10.9,211.5" fill="#8a8272" />
<g><rect x="37.0" y="169.0" width="19.6" height="44.8" fill="#1a1616" />
</g><polygon points="53.8,160.5 60.8,157.2 97.2,157.7 100.0,213.8 45.4,213.8 48.2,185.8" fill="#1d1b1b" />
<polygon points="219.1,-2.0 251.3,-2.0 248.5,59.7 228.9,75.1 203.7,61.1 209.3,23.3" fill="#aeaea7" />
<polygon points="223.3,-2.0 251.3,-2.0 248.5,17.7 226.1,13.4" fill="#c2c2ba" />
<polygon points="228.4,26.1 231.7,27.2 216.6,65.8 212.9,64.2" fill="#2c2723" />
<polygon points="243.5,33.9 246.8,35.3 229.5,71.4 225.6,69.8" fill="#2c2723" />
<polygon points="231.7,28.9 242.4,34.5 226.7,67.5 217.7,64.7" fill="#a5a5a0" />
<polygon points="214.3,75.1 228.9,72.3 234.5,79.3 251.3,211.0 238.7,202.6 226.1,157.7" fill="#a88664" />
<polygon points="231.7,73.7 238.7,59.7 249.9,56.9 268.1,236.2 251.3,236.2 237.3,146.5" fill="#19110f" />
<polygon points="187.4,183.0 198.1,171.8 220.5,165.6 231.7,169.0 232.3,199.8 209.3,198.4 187.4,189.1" fill="#2a1a1c" />
<polygon points="212.7,171.8 222.8,173.2 220.5,191.4 213.5,190.0" fill="#8e7e66" />
<polygon points="246.3,-2.0 287.8,-2.0 287.8,236.2 266.7,236.2 254.1,129.7" fill="url(#cur)" />
<polygon points="261.1,-2.0 263.9,-2.0 276.5,236.2 273.7,236.2" fill="#9c7850" />
<polygon points="270.9,-2.0 273.2,-2.0 282.7,236.2 280.5,236.2" fill="#a07c54" />
<polygon points="9.0,236.2 27.2,219.9 55.2,205.9 93.0,190.8 105.6,202.6 130.8,218.0 156.1,213.8 171.5,191.9 182.7,185.8 209.3,195.9 237.3,205.9 254.7,219.9 265.9,236.2" fill="#313a43" />
<polygon points="80.4,197.0 83.8,197.0 81.8,236.2 79.0,236.2" fill="#222a31" />
<polygon points="85.5,104.5 86.6,73.7 93.0,56.9 108.4,46.2 130.8,41.7 156.1,41.7 177.1,46.2 189.7,57.4 194.7,75.1 193.1,97.5 189.1,112.9 185.8,125.5 181.3,121.3 91.6,121.3 88.3,124.1" fill="#6d5844" />
<g filter="url(#b2)"><polygon points="102.8,49.9 130.8,43.4 142.1,45.7 130.8,70.9 105.6,73.7 95.8,68.1" fill="#8b725a" />
</g><g filter="url(#b2)"><polygon points="147.7,44.6 175.7,47.9 188.3,59.7 191.1,82.1 178.5,79.3 158.9,59.7" fill="#7f6750" />
</g><polygon points="91.1,118.5 93.0,96.1 102.8,83.5 116.8,77.1 142.1,73.7 164.5,78.7 178.5,90.5 183.5,107.3 184.6,135.3 181.3,160.5 172.3,185.8 156.1,208.2 136.5,217.1 116.8,213.8 102.8,199.8 93.9,174.6 89.9,146.5" fill="url(#skin)" />
<ellipse cx="137.9" cy="78.7" rx="42.0" ry="5.0" fill="#9a7458" filter="url(#b2)" opacity=".8"/>
<ellipse cx="186.9" cy="133.9" rx="3.9" ry="13.4" fill="#c69884" />
<ellipse cx="111.2" cy="127.5" rx="14.0" ry="4.5" fill="#8a6656" filter="url(#b2)"/>
<ellipse cx="158.9" cy="129.2" rx="14.0" ry="4.5" fill="#8a6656" filter="url(#b2)"/>
<ellipse cx="110.7" cy="128.9" rx="7.8" ry="1.4" fill="#46322c" />
<ellipse cx="159.4" cy="130.6" rx="7.8" ry="1.4" fill="#46322c" />
<ellipse cx="135.1" cy="161.1" rx="12.3" ry="4.5" fill="#b07e68" filter="url(#b2)"/>
<ellipse cx="125.2" cy="146.5" rx="3.9" ry="16.8" fill="#c0917c" filter="url(#b2)" opacity=".6"/>
<ellipse cx="137.9" cy="169.0" rx="46.2" ry="42.0" fill="#c4927c" filter="url(#b3)" opacity=".55"/>
<g filter="url(#b2)"><polygon points="105.1,172.3 111.8,167.8 119.1,172.3 126.6,167.8 142.1,167.8 154.9,172.9 163.4,168.4 170.1,166.2 168.7,191.4 156.6,211.0 136.5,219.4 117.4,215.5 107.3,203.1 104.0,186.9" fill="#8a5840" />
</g><ellipse cx="132.0" cy="176.8" rx="6.2" ry="1.7" fill="#c09080" filter="url(#b1)"/>
<ellipse cx="133.7" cy="181.0" rx="11.8" ry="1.3" fill="#6a3e32" />
<ellipse cx="135.1" cy="205.4" rx="19.6" ry="8.4" fill="#7a452f" filter="url(#b2)"/>
<ellipse cx="142.1" cy="101.7" rx="25.2" ry="14.0" fill="#e2b8a4" filter="url(#b3)" opacity=".7"/>
</g></g></svg>
</div>
</div>
</body>
</html>
